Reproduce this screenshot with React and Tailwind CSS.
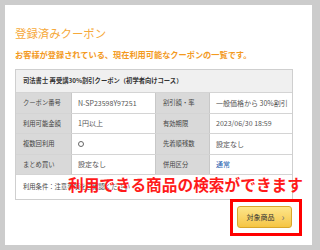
import React from 'react';

const rows = [
    ['クーポン番号', 'N-SP23598Y97251', '割引額・率', '一般価格から 30%割引'],
    ['利用可能金額', '1円以上', '有効期限', '2023/06/30 18:59'],
    ['複数回利用', 'circle', '先着順残数', '設定なし'],
    ['まとめ買い', '設定なし', '併用区分', '通常'],
];

const App = () => {
    return (
        <div className="w-[320px] h-[250px] bg-[#cccccc] pt-[5px] pl-[5px] pr-[8px] pb-[5px]" style={{ fontFamily: '"Noto Sans CJK JP", "Noto Sans", sans-serif' }}>
            <div className="relative w-full h-full bg-white pl-[10px] pr-[19px] pt-[19px]">
                <h1 className="text-[11.4px] leading-[18px] text-[#f6a93b]">登録済みクーポン</h1>
                <p className="mt-[5px] text-[8.2px] leading-[14px] font-bold text-[#f39a1e] whitespace-nowrap">お客様が登録されている、現在利用可能なクーポンの一覧です。</p>

                <div className="mt-[8px] border border-[#cfcfcf] text-[6.3px] text-[#444]">
                    <div className="h-[23px] flex items-center px-[7px] bg-[#f0f0f0] border-b border-[#d4d4d4] font-bold text-[#333] whitespace-nowrap">
                        司法書士 再受講30%割引クーポン（初学者向けコース）
                    </div>
                    {rows.map((r, i) => (
                        <div key={i} className="grid grid-cols-[56px_83px_55px_1fr] h-[20.5px] border-b border-[#d4d4d4]">
                            <div className="bg-[#d9d9d9] flex items-center pl-[7px] border-r border-[#c8c8c8] whitespace-nowrap">{r[0]}</div>
                            <div className="flex items-center pl-[6px] text-[#555] whitespace-nowrap">
                                {r[1] === 'circle' ? <span className="w-[6px] h-[6px] rounded-full border border-[#666]" /> : <span className="text-[7px]">{r[1]}</span>}
                            </div>
                            <div className="bg-[#d9d9d9] flex items-center pl-[7px] border-l border-r border-[#c8c8c8] whitespace-nowrap">{r[2]}</div>
                            <div className={`flex items-center pl-[6px] whitespace-nowrap text-[7px] ${i === 3 ? 'text-[#1f5fb0]' : 'text-[#555]'}`}>{r[3]}</div>
                        </div>
                    ))}
                    <div className="h-[24px] flex items-center pl-[7px] text-[#444]">利用条件：注意事項をご確認ください</div>
                </div>

                <div className="flex justify-end -mt-[1px]">
                    <div className="border-[3px] border-[#ff0000] pl-[4px] pr-[7px] pt-[4px] pb-[5px] -mr-[9px]">
                        <button className="w-[55px] h-[22px] rounded-[3px] border border-[#d9a72a] bg-gradient-to-b from-[#fde68a] to-[#f5c542] text-[7px] text-[#333] flex items-center justify-center gap-[7px] pl-[2px]">
                            対象商品<span className="text-[10px] leading-none text-[#777]">›</span>
                        </button>
                    </div>
                </div>

                <div className="absolute left-[63px] top-[170px] text-[15.7px] leading-[20px] font-bold text-[#ff1a1a] whitespace-nowrap">
                    利用できる商品の検索ができます
                </div>
            </div>
        </div>
    );
};

export default App;
